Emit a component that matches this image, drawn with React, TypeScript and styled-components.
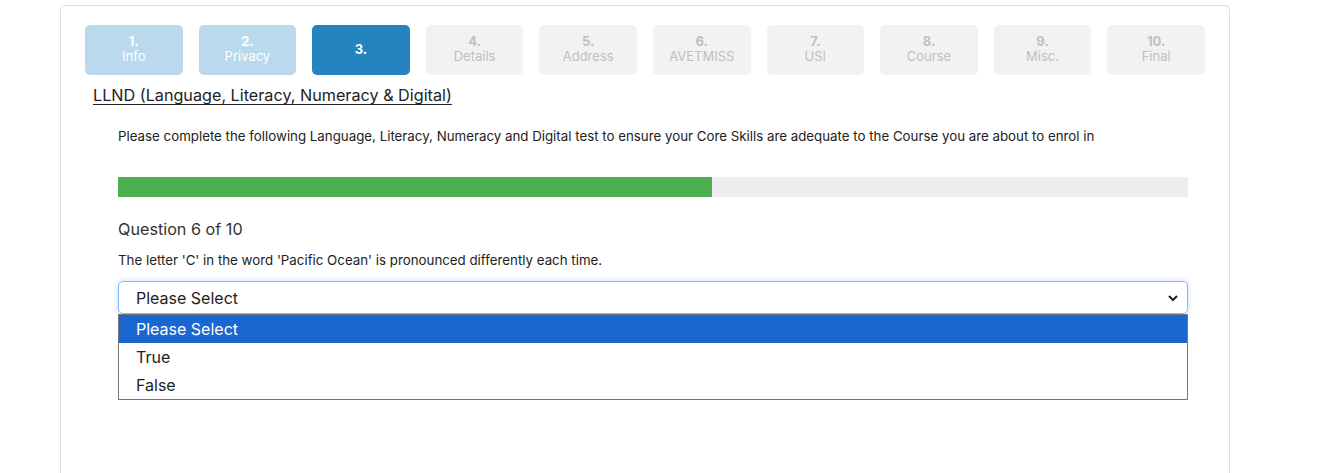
import React from "react";
import styled, { createGlobalStyle } from "styled-components";

const Global = createGlobalStyle`
  html, body { margin: 0; padding: 0; background: #fff; }
  body { font-family: Inter, "Noto Sans", Arial, sans-serif; color: #212529; overflow: hidden; }
  * { box-sizing: border-box; }
`;

const Card = styled.div`
  margin: 5px 0 0 60px;
  width: 1170px;
  min-height: 520px;
  border: 1px solid #dedede;
  border-radius: 5px;
  padding: 19px 24px 0 24px;
`;

const Steps = styled.div`
  display: flex;
  gap: 16px;
`;

type StepState = "done" | "active" | "todo";

const Step = styled.div<{ $state: StepState }>`
  flex: 1;
  height: 50px;
  border-radius: 5px;
  display: flex;
  flex-direction: column;
  align-items: center;
  justify-content: center;
  padding-bottom: 2px;
  font-size: 13px;
  line-height: 15px;
  background: ${(p) =>
    p.$state === "done" ? "#bad9ed" : p.$state === "active" ? "#2384c0" : "#f2f2f2"};
  color: ${(p) => (p.$state === "todo" ? "#c0c0c0" : "#fff")};
  & b { font-weight: 700; }
`;

const Title = styled.div`
  margin: 9px 0 0 8px;
  font-size: 16.2px;
  line-height: 22px;
  color: #222;
  text-decoration: underline;
  text-underline-offset: 3px;
  text-decoration-thickness: 1px;
`;

const Body = styled.div`
  padding: 0 17px 0 33px;
`;

const Intro = styled.p`
  margin: 20px 0 0;
  font-size: 13.3px;
  line-height: 20px;
  color: #222;
`;

const Track = styled.div`
  margin-top: 31px;
  height: 20px;
  background: #eeeeee;
`;

const Fill = styled.div`
  height: 100%;
  background: #4caf50;
`;

const QHead = styled.div`
  margin-top: 21px;
  font-size: 16.2px;
  line-height: 22px;
  color: #333;
`;

const QText = styled.div`
  margin-top: 10px;
  font-size: 13.3px;
  line-height: 20px;
  color: #222;
`;

const SelectWrap = styled.div`
  position: relative;
  margin-top: 11px;
`;

const SelectBox = styled.div`
  height: 33px;
  border: 1px solid #86b7fe;
  border-radius: 5px;
  box-shadow: 0 0 4px 1px rgba(13, 110, 253, 0.18);
  display: flex;
  align-items: center;
  justify-content: space-between;
  padding: 0 8px 0 17px;
  font-size: 16px;
  color: #222;
`;

const Menu = styled.div`
  position: absolute;
  left: 0;
  right: 0;
  top: 33px;
  border: 1px solid #767676;
  background: #fff;
`;

const Option = styled.div<{ $selected?: boolean }>`
  height: 28px;
  display: flex;
  align-items: center;
  padding-left: 17px;
  font-size: 16px;
  background: ${(p) => (p.$selected ? "#1a67d2" : "#fff")};
  color: ${(p) => (p.$selected ? "#fff" : "#222")};
`;

const steps: { n: string; label?: string; state: StepState }[] = [
  { n: "1.", label: "Info", state: "done" },
  { n: "2.", label: "Privacy", state: "done" },
  { n: "3.", state: "active" },
  { n: "4.", label: "Details", state: "todo" },
  { n: "5.", label: "Address", state: "todo" },
  { n: "6.", label: "AVETMISS", state: "todo" },
  { n: "7.", label: "USI", state: "todo" },
  { n: "8.", label: "Course", state: "todo" },
  { n: "9.", label: "Misc.", state: "todo" },
  { n: "10.", label: "Final", state: "todo" },
];

export default function App() {
  const progress = 55.5;
  return (
    <>
      <Global />
      <Card>
        <Steps>
          {steps.map((s) => (
            <Step key={s.n} $state={s.state}>
              <b>{s.n}</b>
              {s.label && <span>{s.label}</span>}
            </Step>
          ))}
        </Steps>
        <Title>LLND (Language, Literacy, Numeracy &amp; Digital)</Title>
        <Body>
          <Intro>
            Please complete the following Language, Literacy, Numeracy and Digital test to ensure your Core Skills are adequate to the Course you are about to enrol in
          </Intro>
          <Track>
            <Fill style={{ width: `${progress}%` }} />
          </Track>
          <QHead>Question 6 of 10</QHead>
          <QText>The letter 'C' in the word 'Pacific Ocean' is pronounced differently each time.</QText>
          <SelectWrap>
            <SelectBox>
              <span>Please Select</span>
              <svg width="12" height="12" viewBox="0 0 12 12">
                <path d="M2 4 L6 8 L10 4" fill="none" stroke="#222" strokeWidth="2" />
              </svg>
            </SelectBox>
            <Menu>
              <Option $selected>Please Select</Option>
              <Option>True</Option>
              <Option>False</Option>
            </Menu>
          </SelectWrap>
        </Body>
      </Card>
    </>
  );
}
